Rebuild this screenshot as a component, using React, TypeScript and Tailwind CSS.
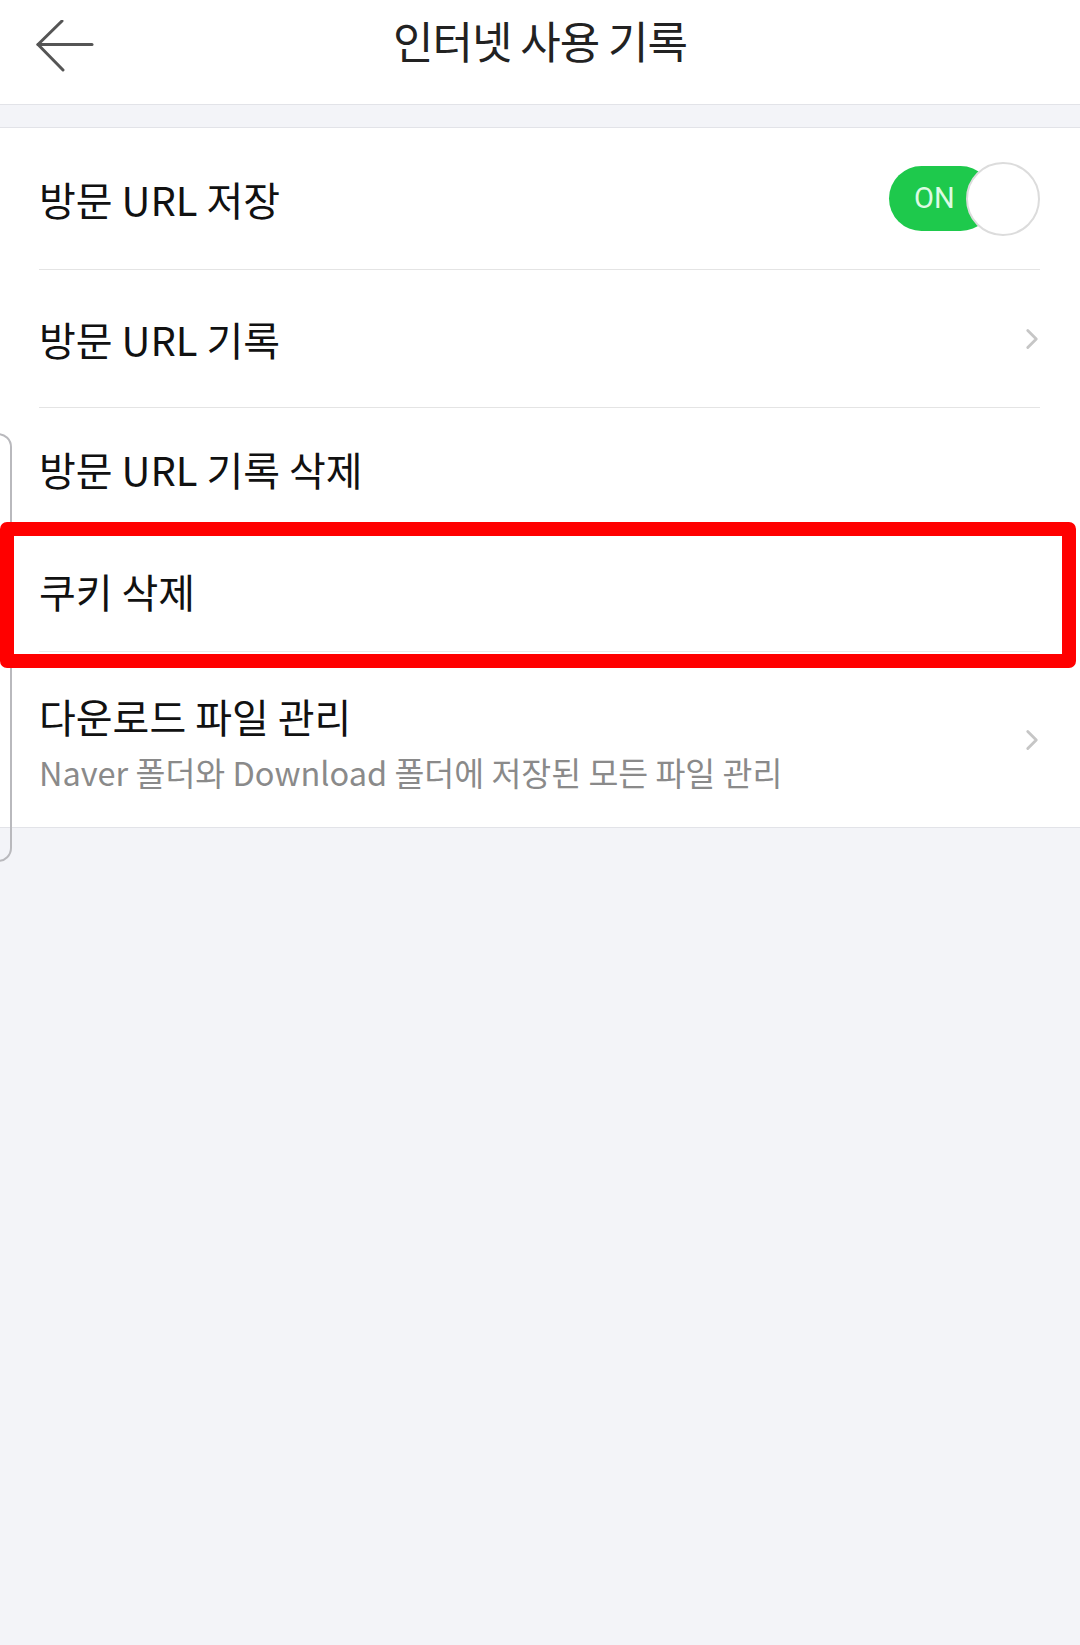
import { ChevronRight } from "lucide-react";

const font = { fontFamily: '"Noto Sans CJK KR", "Noto Sans", sans-serif' };

function BackArrow() {
  return (
    <svg width="58" height="52" viewBox="0 0 58 52" fill="none">
      <path d="M2 24.5 H56" stroke="#555" strokeWidth="3" strokeLinecap="round" />
      <path d="M26 1 L2 24.5 L27 50" stroke="#555" strokeWidth="3" strokeLinecap="round" strokeLinejoin="round" />
    </svg>
  );
}

function Toggle() {
  return (
    <div className="relative w-[151px] h-[74px] flex items-center">
      <div className="h-[65px] w-[104px] rounded-full bg-[#1ec94c] flex items-center pl-[25px]">
        <span className="text-[29px] leading-none text-[#dcfbe3]" style={{ fontFamily: "Roboto, sans-serif" }}>
          ON
        </span>
      </div>
      {/* knob */}
      <div className="absolute right-0 top-0 w-[74px] h-[74px] rounded-full bg-white border-2 border-[#dcdcdc]" />
    </div>
  );
}

function Chevron() {
  return <ChevronRight className="w-[34px] h-[34px] text-[#c6c6c6] -mr-[9px]" strokeWidth={2} />;
}

export default function App() {
  return (
    <div className="relative w-[1080px] h-[1645px] bg-[#f3f4f8] overflow-hidden" style={font}>
      {/* 헤더 */}
      <div className="relative h-[105px] bg-white border-b border-[#e2e3e8] flex items-center justify-center">
        <div className="absolute left-[36px] top-[20px]">
          <BackArrow />
        </div>
        <h1 className="text-[44px] tracking-[-1px] text-[#222] leading-none -mt-[24px]">인터넷 사용 기록</h1>
      </div>

      {/* 여백 띠 */}
      <div className="h-[23px] border-b border-[#e2e3e8]" />

      {/* 목록 */}
      <div className="bg-white border-b border-[#e2e3e8]">
        <div className="h-[142px] ml-[39px] mr-[40px] border-b border-[#e4e4e4] flex items-center justify-between">
          <span className="text-[40px] text-[#111] leading-none">방문 URL 저장</span>
          <Toggle />
        </div>

        <div className="h-[138px] ml-[39px] mr-[40px] border-b border-[#e4e4e4] flex items-center justify-between">
          <span className="text-[40px] text-[#111] leading-none">방문 URL 기록</span>
          <Chevron />
        </div>

        <div className="h-[123px] ml-[39px] mr-[40px] border-b border-[#e4e4e4] flex items-center">
          <span className="text-[40px] text-[#111] leading-none">방문 URL 기록 삭제</span>
        </div>

        <div className="relative h-[121px]">
          <div className="h-full ml-[39px] mr-[40px] border-b border-[#ececec] flex items-center">
            <span className="text-[40px] text-[#111] leading-none">쿠키 삭제</span>
          </div>
          {/* 강조 표시 */}
          <div className="absolute z-10 -top-[9px] -bottom-[16px] left-0 right-[4px] border-[14px] border-[#ff0000] rounded-[7px]" />
        </div>

        <div className="h-[175px] pl-[39px] pr-[40px] flex items-center justify-between">
          <div className="flex flex-col gap-[14px] pt-[4px]">
            <span className="text-[40px] text-[#111] leading-[46px]">다운로드 파일 관리</span>
            <span className="text-[32.5px] text-[#8a8a8a] leading-[38px]">
              Naver 폴더와 Download 폴더에 저장된 모든 파일 관리
            </span>
          </div>
          <Chevron />
        </div>
      </div>

      {/* 화면 가장자리 패널 */}
      <div className="absolute -left-[20px] top-[433px] w-[32px] h-[429px] border-2 border-[#b9b9bd] rounded-[14px]" />
    </div>
  );
}
